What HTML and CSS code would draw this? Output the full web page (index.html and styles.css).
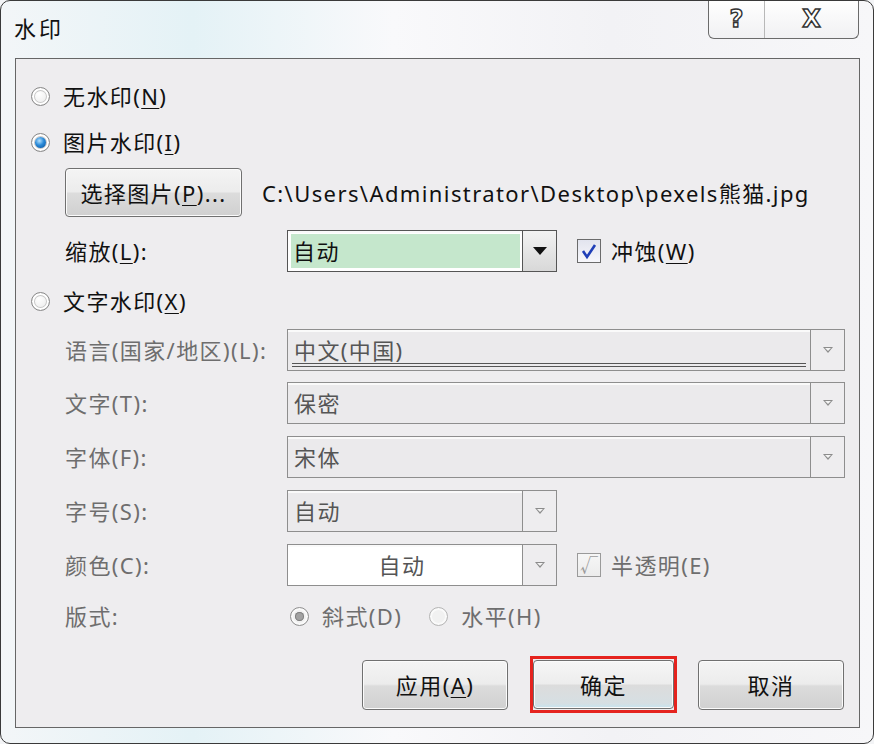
FILE: index.html
```html
<!DOCTYPE html>
<html lang="zh-CN">
<head>
    <meta charset="UTF-8">
    <title>水印</title>
    <link rel="stylesheet" href="styles.css">
</head>
<body>

<div class="window">
    <!-- 标题栏 -->
    <div class="titlebar">
        <div class="title">水印</div>
        <div class="caption-btns">
            <div class="cap-btn cap-help">?</div>
            <div class="cap-btn cap-close">X</div>
        </div>
    </div>

    <div class="client">
        <!-- 无水印 -->
        <div class="row row-radio r1">
            <span class="radio"></span>
            <span class="txt">无水印(<u>N</u>)</span>
        </div>

        <!-- 图片水印 -->
        <div class="row row-radio r2">
            <span class="radio checked"></span>
            <span class="txt">图片水印(<u>I</u>)</span>
        </div>

        <div class="row indent r3">
            <button class="btn btn-pick">选择图片(<u>P</u>)...</button>
            <span class="path">C:\Users\Administrator\Desktop\pexels熊猫.jpg</span>
        </div>

        <div class="row indent r4">
            <span class="label">缩放(<u>L</u>):</span>
            <div class="combo combo-short combo-green">
                <span class="value">自动</span>
                <span class="drop"><span class="arrow"></span></span>
            </div>
            <span class="check on"><svg width="18" height="18" viewBox="0 0 18 18"><path d="M3 9 L7 15 L15 3" fill="none" stroke="#1f3fb8" stroke-width="2.6"/></svg></span>
            <span class="txt">冲蚀(<u>W</u>)</span>
        </div>

        <!-- 文字水印 -->
        <div class="row row-radio r5">
            <span class="radio"></span>
            <span class="txt">文字水印(<u>X</u>)</span>
        </div>

        <div class="row indent off r6">
            <span class="label">语言(国家/地区)(L):</span>
            <div class="combo combo-long lang">
                <span class="value">中文(中国)</span>
                <span class="drop"><span class="arrow-off"></span></span>
            </div>
        </div>

        <div class="row indent off r7">
            <span class="label">文字(T):</span>
            <div class="combo combo-long">
                <span class="value">保密</span>
                <span class="drop"><span class="arrow-off"></span></span>
            </div>
        </div>

        <div class="row indent off r8">
            <span class="label">字体(F):</span>
            <div class="combo combo-long">
                <span class="value">宋体</span>
                <span class="drop"><span class="arrow-off"></span></span>
            </div>
        </div>

        <div class="row indent off r9">
            <span class="label">字号(S):</span>
            <div class="combo combo-short">
                <span class="value">自动</span>
                <span class="drop"><span class="arrow-off"></span></span>
            </div>
        </div>

        <div class="row indent off r10">
            <span class="label">颜色(C):</span>
            <div class="combo combo-short combo-white">
                <span class="value center">自动</span>
                <span class="drop"><span class="arrow-off"></span></span>
            </div>
            <span class="check">√</span>
            <span class="txt">半透明(E)</span>
        </div>

        <div class="row indent off r11">
            <span class="label">版式:</span>
            <span class="radio dim checked-off"></span>
            <span class="txt opt">斜式(D)</span>
            <span class="radio dim second"></span>
            <span class="txt opt">水平(H)</span>
        </div>

        <!-- 按钮 -->
        <div class="actions">
            <button class="btn btn-act">应用(<u>A</u>)</button>
            <div class="highlight">
                <button class="btn btn-act btn-default">确定</button>
            </div>
            <button class="btn btn-act">取消</button>
        </div>
    </div>
</div>

</body>
</html>
```

FILE: styles.css
```css
/* 对话框整体 */
body {
    margin: 0;
    font-family: "Noto Sans", "Noto Sans CJK SC", sans-serif;
    background-color: #f3f4f6;
}

.window {
    width: 872px;
    height: 742px;
    border: 1px solid #3a3a3a;
    border-radius: 10px;
    background: linear-gradient(90deg, #f3f6f8 0%, #e4f2f6 22%, #f9f9fb 45%, #f2f2f5 70%, #f7f7f9 100%);
    overflow: hidden;
}

.titlebar {
    height: 57px;
    display: flex;
    justify-content: space-between;
    align-items: flex-start;
}

.title {
    margin: 10px 0 0 13px;
    font-family: "Noto Sans CJK SC", sans-serif;
    font-size: 22px;
    letter-spacing: 3px;
    color: #111;
}

.caption-btns {
    display: flex;
    margin-right: 14px;
    margin-top: -1px;
    border: 1px solid #6b6b6b;
    border-top: none;
    border-radius: 0 0 6px 6px;
    background: linear-gradient(#ffffff, #f1f1f3);
    height: 38px;
}

.cap-btn {
    display: flex;
    align-items: center;
    justify-content: center;
    font-family: "DejaVu Sans", sans-serif;
    font-weight: bold;
    font-size: 24px;
    color: #ffffff;
    -webkit-text-stroke: 1.4px #333;
}

.cap-help {
    width: 55px;
    border-right: 1px solid #b8b8b8;
}

.cap-close {
    width: 93px;
}

/* 客户区 */
.client {
    margin: 0 13px 0 14px;
    height: 670px;
    border: 1px solid #666;
    background-color: #eeedef;
    padding: 22px 0 0 15px;
    box-sizing: border-box;
    display: flex;
    flex-direction: column;
    font-size: 22px;
    line-height: 1;
    letter-spacing: 1.4px;
    color: #111;
}

.row {
    display: flex;
    align-items: center;
}

.row-radio {
    height: 30px;
}

.indent {
    padding-left: 34px;
}

.off {
    color: #6e6e6e;
}

.r2 { margin-top: 16px; }
.r3 { margin-top: 11px; height: 49px; padding-left: 34px; }
.r4 { margin-top: 13px; height: 42px; }
.r5 { margin-top: 14px; }
.r6 { margin-top: 13px; height: 42px; }
.r7 { margin-top: 11px; height: 42px; }
.r8 { margin-top: 12px; height: 42px; }
.r9 { margin-top: 11px; height: 43px; }
.r10 { margin-top: 11px; height: 43px; }
.r11 { margin-top: 15px; height: 30px; }

u {
    text-decoration-thickness: 1px;
    text-underline-offset: 3px;
}

.txt {
    white-space: nowrap;
}

/* 单选按钮 */
.radio {
    width: 17px;
    height: 17px;
    border-radius: 50%;
    border: 1px solid #8a8a8a;
    background: radial-gradient(circle at 40% 35%, #ffffff 0%, #f2f2f2 50%, #d0d0d0 100%);
    box-shadow: inset 0 0 0 2px #ffffff, inset 0 0 0 3px #c8c8c8;
    margin-right: 13px;
    flex-shrink: 0;
    position: relative;
}

.radio.checked::after {
    content: "";
    position: absolute;
    left: 3px;
    top: 3px;
    width: 11px;
    height: 11px;
    border-radius: 50%;
    background: radial-gradient(circle at 40% 35%, #b5e2ff 0%, #2a8ad8 45%, #0b4f96 100%);
}

.radio.dim {
    border-color: #b5b5b5;
    background: #f1f1f1;
    box-shadow: inset 0 0 0 2px #fafafa;
    margin-left: 3px;
}

.radio.checked-off {
    border-color: #8f8f8f;
}

.radio.checked-off::after {
    content: "";
    position: absolute;
    left: 4px;
    top: 4px;
    width: 9px;
    height: 9px;
    border-radius: 50%;
    background: #a2a2a2;
    box-shadow: inset 0 0 0 1px #808080;
}

.radio.second {
    margin-left: 27px;
}

/* 按钮 */
.btn {
    font-family: "Noto Sans", "Noto Sans CJK SC", sans-serif;
    font-size: 22px;
    line-height: 1;
    letter-spacing: 1.4px;
    color: #111;
    border: 1px solid #707070;
    border-radius: 4px;
    background: linear-gradient(#f4f4f4 0%, #ececec 48%, #dcdcdc 52%, #d0d0d0 100%);
    box-shadow: inset 0 0 0 1px #fbfbfb;
    cursor: pointer;
    padding: 0;
}

.btn-pick {
    width: 177px;
    height: 49px;
}

.path {
    margin-left: 20px;
    white-space: nowrap;
    color: #111;
}

/* 下拉框 */
.label {
    width: 222px;
    flex-shrink: 0;
    white-space: nowrap;
}

.combo {
    height: 42px;
    box-sizing: border-box;
    border: 1px solid #8e8e8e;
    display: flex;
    background-color: #ebeaec;
    box-shadow: inset 0 2px 0 #fafafa;
}

.combo-short {
    width: 270px;
}

.combo-long {
    width: 558px;
}

.combo .value {
    flex: 1;
    padding-left: 6px;
    display: flex;
    align-items: center;
    color: #555;
}

.combo .value.center {
    justify-content: center;
    padding-left: 0;
    padding-right: 6px;
}

.combo-green {
    background-color: #ffffff;
    border-color: #555;
    padding: 3px 0 2px 3px;
}

.combo-green .value {
    background-color: #c5e7cc;
    color: #111;
    padding-left: 2px;
    margin-bottom: 1px;
}

.combo-white {
    background-color: #ffffff;
}

.combo .drop {
    width: 33px;
    border-left: 1px solid #8e8e8e;
    background-color: #eeedef;
    display: flex;
    align-items: center;
    justify-content: center;
}

.combo-green .drop {
    margin: -3px 0 -2px 2px;
    border-left-color: #555;
    background: linear-gradient(#f2f2f2, #d8d8d8);
}

.arrow {
    width: 0;
    height: 0;
    border-left: 7px solid transparent;
    border-right: 7px solid transparent;
    border-top: 8px solid #111;
}

.arrow-off {
    width: 0;
    height: 0;
    border-left: 5px solid transparent;
    border-right: 5px solid transparent;
    border-top: 6px solid #8c8c8c;
    position: relative;
}

.arrow-off::after {
    content: "";
    position: absolute;
    left: -3px;
    top: -5px;
    border-left: 3px solid transparent;
    border-right: 3px solid transparent;
    border-top: 3px solid #f4f4f4;
}

.lang .value {
    position: relative;
}

.lang .value::after {
    content: "";
    position: absolute;
    left: 4px;
    right: 4px;
    bottom: 3px;
    height: 2px;
    border-top: 1px solid #555;
    border-bottom: 1px solid #555;
}

/* 复选框 */
.check {
    width: 22px;
    height: 22px;
    border: 1px solid #9a9a9a;
    background: linear-gradient(#f6f6f6, #ececec);
    margin: 0 10px 0 20px;
    display: flex;
    align-items: center;
    justify-content: center;
    color: #9b9b9b;
    font-size: 18px;
    letter-spacing: 0;
    flex-shrink: 0;
}

.check.on {
    border-color: #6b6b6b;
    background: linear-gradient(#e2e4ee, #f7f7fb);
}

/* 底部按钮 */
.actions {
    margin-top: 25px;
    display: flex;
    justify-content: flex-end;
    align-items: center;
    padding-right: 15px;
    height: 57px;
}

.btn-act {
    width: 146px;
    height: 50px;
}

.highlight {
    border: 3px solid #e5231e;
    padding: 1px 0;
    margin: 0 21px 0 22px;
    display: flex;
}

.btn-default {
    width: 141px;
    height: 49px;
    background: linear-gradient(#f6f6f6 0%, #ededed 48%, #dcdcdc 52%, #d6dfe3 90%, #c6e4f0 100%);
}
```
